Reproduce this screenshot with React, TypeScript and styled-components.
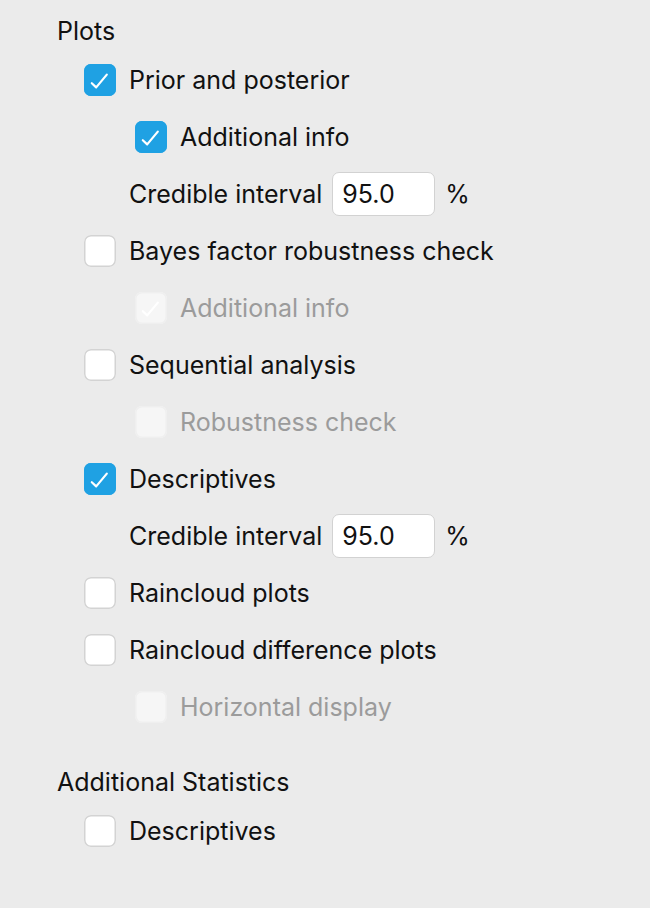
import React from 'react';
import styled, { createGlobalStyle } from 'styled-components';

const GlobalStyle = createGlobalStyle`
    html, body {
        margin: 0;
        padding: 0;
        background: #ebebeb;
    }
    body {
        font-family: Inter, "Noto Sans", sans-serif;
        color: #111;
    }
`;

const Panel = styled.div`
    width: 650px;
    height: 908px;
    box-sizing: border-box;
    padding: 10px 0 0 57px;
    background: #ebebeb;
    display: flex;
    flex-direction: column;
`;

const SectionTitle = styled.div<{ $gap?: number }>`
    height: 41px;
    display: flex;
    align-items: center;
    font-size: 25px;
    margin-top: ${(p) => p.$gap ?? 0}px;
`;

const Row = styled.div<{ $indent: number }>`
    height: 57px;
    display: flex;
    align-items: center;
    gap: 13px;
    padding-left: ${(p) => p.$indent}px;
    font-size: 25px;
`;

const Label = styled.span<{ $disabled?: boolean }>`
    color: ${(p) => (p.$disabled ? '#9b9b9b' : '#111')};
    white-space: nowrap;
`;

const Box = styled.span<{ $checked?: boolean; $disabled?: boolean }>`
    width: 32px;
    height: 32px;
    border-radius: 7px;
    flex-shrink: 0;
    display: flex;
    background: ${(p) => (p.$disabled ? '#f6f6f6' : p.$checked ? '#1fa1e3' : '#fff')};
    box-shadow: inset 0 0 0 1.5px
        ${(p) => (p.$disabled ? '#efefef' : p.$checked ? '#1fa1e3' : '#d3d3d3')};
`;

const NumberInput = styled.div`
    width: 103px;
    height: 44px;
    box-sizing: border-box;
    border: 1.5px solid #d2d2d2;
    border-radius: 7px;
    background: #fff;
    display: flex;
    align-items: center;
    padding-left: 9px;
    margin-left: -3px;
`;

const Unit = styled.span`
    margin-left: -3px;
`;

const Check = ({ color }: { color: string }) => (
    <svg width="32" height="32" viewBox="0 0 32 32">
        <path
            d="M7.8 19.2 L12.2 23.4 L22.8 10.6"
            fill="none"
            stroke={color}
            strokeWidth="2.2"
            strokeLinecap="round"
            strokeLinejoin="round"
        />
    </svg>
);

type CheckRowProps = {
    label: string;
    level: number;
    checked?: boolean;
    disabled?: boolean;
};

const CheckRow = ({ label, level, checked, disabled }: CheckRowProps) => (
    <Row $indent={27 + level * 51}>
        <Box $checked={checked} $disabled={disabled}>
            {checked && <Check color="#fff" />}
        </Box>
        <Label $disabled={disabled}>{label}</Label>
    </Row>
);

const IntervalRow = ({ value }: { value: string }) => (
    <Row $indent={72}>
        <Label>Credible interval</Label>
        <NumberInput>{value}</NumberInput>
        <Unit>%</Unit>
    </Row>
);

export default function App() {
    return (
        <>
            <GlobalStyle />
            <Panel>
                <SectionTitle>Plots</SectionTitle>
                <CheckRow level={0} label="Prior and posterior" checked />
                <CheckRow level={1} label="Additional info" checked />
                <IntervalRow value="95.0" />
                <CheckRow level={0} label="Bayes factor robustness check" />
                <CheckRow level={1} label="Additional info" checked disabled />
                <CheckRow level={0} label="Sequential analysis" />
                <CheckRow level={1} label="Robustness check" disabled />
                <CheckRow level={0} label="Descriptives" checked />
                <IntervalRow value="95.0" />
                <CheckRow level={0} label="Raincloud plots" />
                <CheckRow level={0} label="Raincloud difference plots" />
                <CheckRow level={1} label="Horizontal display" disabled />
                <SectionTitle $gap={26}>Additional Statistics</SectionTitle>
                <CheckRow level={0} label="Descriptives" />
            </Panel>
        </>
    );
}
